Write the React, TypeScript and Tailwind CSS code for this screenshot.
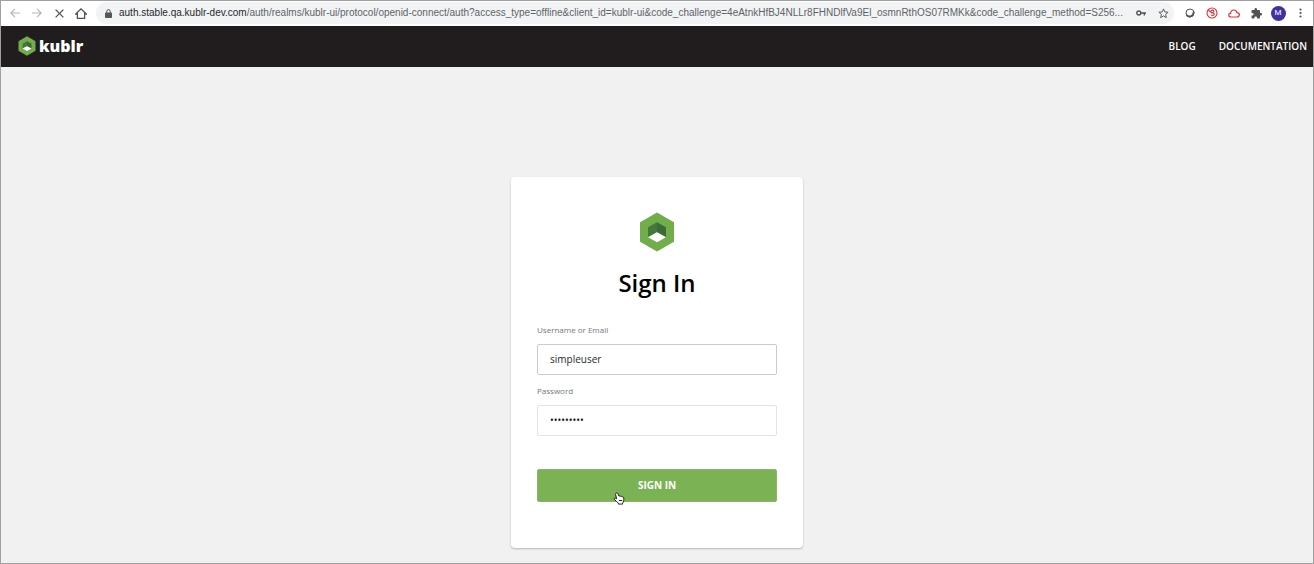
import type { ReactNode } from 'react'

const URL_HOST = 'auth.stable.qa.kublr-dev.com'
const URL_PATH =
  '/auth/realms/kublr-ui/protocol/openid-connect/auth?access_type=offline&client_id=kublr-ui&code_challenge=4eAtnkHfBJ4NLLr8FHNDlfVa9El_osmnRthOS07RMKk&code_challenge_method=S256...'

const NAV_LINKS = [
  { text: 'BLOG', url: '#blog' },
  { text: 'DOCUMENTATION', url: '#documentation' },
]

interface IconButtonProps {
  label: string
  className?: string
  children: ReactNode
}

function IconButton({ label, className = 'text-[#505256]', children }: IconButtonProps) {
  return (
    <button
      type="button"
      aria-label={label}
      className={`flex h-4 w-[22px] shrink-0 items-center justify-center ${className}`}
    >
      {children}
    </button>
  )
}

function KublrMark({ className }: { className: string }) {
  return (
    <svg className={className} viewBox="0 0 36 40" aria-hidden="true">
      <path d="M18 .5l17 9.800v19.400l-17 9.800-17-9.800V10.300z" fill="#72ad4b" />
      <path d="M18 10.300l9 5v9.700l-9-4.700z" fill="#3b6b37" />
      <path d="M18 10.300l-9 5v9.700l9-4.700z" fill="#47773e" />
      <path d="M18 20.300l9 4.900-9 5-9-5z" fill="#fff" />
    </svg>
  )
}

function BrowserBar() {
  return (
    <div className="flex h-[25px] items-center bg-white pr-0.5 pb-px pl-[3px]">
      <IconButton label="Back" className="text-[#b4b5b7]">
        <svg className="h-[10px] w-[10px]" viewBox="0 0 10 10" fill="none" stroke="currentColor" strokeWidth="1.2">
          <path d="M10 5H.8M5 .8L.8 5 5 9.200" />
        </svg>
      </IconButton>
      <IconButton label="Forward" className="text-[#b4b5b7]">
        <svg className="h-[10px] w-[10px]" viewBox="0 0 10 10" fill="none" stroke="currentColor" strokeWidth="1.2">
          <path d="M0 5h9.200M5 .8L9.200 5 5 9.200" />
        </svg>
      </IconButton>
      <IconButton label="Stop loading">
        <svg className="h-[9px] w-[9px]" viewBox="0 0 9 9" fill="none" stroke="currentColor" strokeWidth="1.3">
          <path d="M.6.6l7.800 7.800M8.400.6L.6 8.400" />
        </svg>
      </IconButton>
      <IconButton label="Home">
        <svg className="h-[11px] w-3" viewBox="0 0 12 11" fill="none" stroke="currentColor" strokeWidth="1.3">
          <path d="M.8 6L6 .9 11.200 6H9.600v4.300H2.400V6z" />
        </svg>
      </IconButton>

      <div className="ml-1 flex h-[22px] min-w-0 flex-1 items-center rounded-full bg-[#f1f3f4] pl-[9px]">
        <svg className="h-[9px] w-[7px] shrink-0" viewBox="0 0 7 9" aria-hidden="true">
          <path d="M1.800 4V2.300a1.700 1.700 0 013.400 0V4" fill="none" stroke="#55575b" />
          <rect y="3.500" width="7" height="5.500" rx=".7" fill="#55575b" />
        </svg>
        <p className="ml-[7px] min-w-0 flex-1 overflow-hidden whitespace-nowrap font-['Liberation_Sans',sans-serif] text-[10px] leading-4 text-[#5f6368]">
          <span className="text-[#26282b]">{URL_HOST}</span>
          {URL_PATH}
        </p>
        <IconButton label="Saved passwords">
          <svg className="h-[6px] w-[10px]" viewBox="0 0 10 6" fill="none" stroke="currentColor" strokeWidth="1.4">
            <circle cx="2.800" cy="3" r="2" />
            <path d="M4.800 3H10M8.300 3v2.400" />
          </svg>
        </IconButton>
        <IconButton label="Bookmark this page">
          <svg className="h-[11px] w-[11px]" viewBox="0 0 12 12" fill="none" stroke="currentColor">
            <path d="M6 1l1.400 3.300 3.600.3-2.700 2.400.8 3.500L6 8.600l-3.100 1.900.8-3.500L1 4.600l3.600-.3z" />
          </svg>
        </IconButton>
      </div>

      <div className="ml-[5px] flex shrink-0">
        <IconButton label="Screen capture">
          <svg className="h-[10px] w-[10px]" viewBox="0 0 10 10" fill="none" stroke="currentColor">
            <circle cx="5" cy="5" r="4" />
            <path d="M1.700 7.200a4 4 0 006.800-3.500" strokeWidth="1.8" />
          </svg>
        </IconButton>
        <IconButton label="Blocker" className="text-[#dc3038]">
          <svg className="h-3 w-3" viewBox="0 0 12 12" fill="none" stroke="currentColor" strokeWidth="1.1">
            <circle cx="6" cy="6" r="5" />
            <path d="M2.300 3L6 6M4.800 3.800c2-1.300 3.700-.3 2.700 1.200L6 6c2.800-.4 3 2.300.8 2.500L5 8" />
          </svg>
        </IconButton>
        <IconButton label="Cloud" className="text-[#dc3038]">
          <svg className="h-[9px] w-3" viewBox="0 0 12 9" fill="none" stroke="currentColor" strokeWidth="1.2">
            <path d="M3 8C1.400 8 .7 7.200.7 6.100c0-1 .8-1.800 1.900-1.800C2.800 2.400 4 1 5.800 1c1.700 0 2.800 1 3.200 2.700 1.400 0 2.300.9 2.300 2.100C11.300 7.200 10.300 8 9 8z" />
          </svg>
        </IconButton>
        <IconButton label="Extensions">
          <svg className="h-[11px] w-[11px]" viewBox="1 1 22 22" fill="currentColor">
            <path d="M20.500 11H19V7a2 2 0 00-2-2h-4V3.500a2.500 2.500 0 00-5 0V5H4a2 2 0 00-2 2v3.800h1.500a2.700 2.700 0 010 5.400H2V20a2 2 0 002 2h3.800v-1.500a2.700 2.700 0 015.400 0V22H17a2 2 0 002-2v-4h1.500a2.500 2.500 0 000-5z" />
          </svg>
        </IconButton>
        <IconButton label="Profile">
          <span className="flex h-[15px] w-[15px] items-center justify-center rounded-full bg-[#4230a3] font-['Roboto',sans-serif] text-[8px] leading-none text-white">
            M
          </span>
        </IconButton>
        <IconButton label="Menu">
          <svg className="h-[10px] w-[3px]" viewBox="0 0 3 10" fill="currentColor">
            <circle cx="1.500" cy="1.500" r="1.100" />
            <circle cx="1.500" cy="5" r="1.100" />
            <circle cx="1.500" cy="8.500" r="1.100" />
          </svg>
        </IconButton>
      </div>
    </div>
  )
}

function SiteHeader() {
  return (
    <header className="flex h-[41px] items-center justify-between bg-[#211d1e] pr-1.5 pb-px pl-[17px]">
      <a href="#home" className="flex items-center gap-[3px] text-white">
        <KublrMark className="h-5 w-[18px]" />
        <span className="text-base leading-5 font-extrabold">kublr</span>
      </a>
      <nav className="flex gap-[23px] text-[10px] leading-4 font-semibold text-white">
        {NAV_LINKS.map((link) => (
          <a key={link.text} href={link.url}>
            {link.text}
          </a>
        ))}
      </nav>
    </header>
  )
}

function HandCursor() {
  return (
    <svg className="absolute top-[23px] left-[76px] h-[13px] w-3" viewBox="0 0 12 14" aria-hidden="true">
      <path
        d="M3 1.200c.8-.5 1.600 0 1.900.8L6 4.500c.8-.5 1.500-.3 1.900.3.700-.3 1.300-.1 1.600.5.900-.2 1.500.3 1.600 1.200.2 2.200-.1 3.800-1.200 5.500v1H5.300v-1C3.800 10.800 2.300 9.500 1 7.800.4 6.800 1.500 6 2.500 6.700l1 .6-1.200-4.600c-.1-.6.200-1.200.7-1.500z"
        fill="#fff"
        stroke="#111"
      />
      <path d="M5.800 9.200h3.700" stroke="#111" />
    </svg>
  )
}

function SignInCard() {
  return (
    <form className="w-[292px] rounded bg-white px-[26px] pt-[35px] pb-[46px] shadow-[0_1px_2px_rgba(0,0,0,0.25)]">
      <KublrMark className="mx-auto h-10 w-9" />
      <h1 className="mt-[15px] text-center text-2xl leading-8 font-semibold text-black">Sign In</h1>

      <label htmlFor="username" className="mt-[25px] block text-[8px] leading-3 text-[#74777c]">
        Username or Email
      </label>
      <input
        id="username"
        type="text"
        defaultValue="simpleuser"
        className="mt-2 block h-[31px] w-full rounded-xs border border-[#c9cccb] bg-white px-3 pb-0.5 text-[10px] text-[#26282b]"
      />

      <label htmlFor="password" className="mt-[10px] block text-[8px] leading-3 text-[#74777c]">
        Password
      </label>
      <input
        id="password"
        type="password"
        defaultValue="simplepwd"
        className="mt-2 block h-[31px] w-full rounded-xs border border-[#dfe5e2] bg-white px-3 pb-0.5 text-[10px] text-[#111]"
      />

      <div className="relative mt-[33px]">
        <button
          type="submit"
          className="h-[33px] w-full cursor-pointer rounded-xs border border-[#8bb56b] bg-[#7bb254] text-[10px] font-bold text-white"
        >
          SIGN IN
        </button>
        <HandCursor />
      </div>
    </form>
  )
}

export default function App() {
  return (
    <div className="flex min-h-screen flex-col border border-[#a0a0a0] bg-[#f1f1f1] font-['Open_Sans',sans-serif]">
      <BrowserBar />
      <SiteHeader />
      <main className="flex flex-1 items-start justify-center pt-[110px] pb-[14px]">
        <SignInCard />
      </main>
    </div>
  )
}
